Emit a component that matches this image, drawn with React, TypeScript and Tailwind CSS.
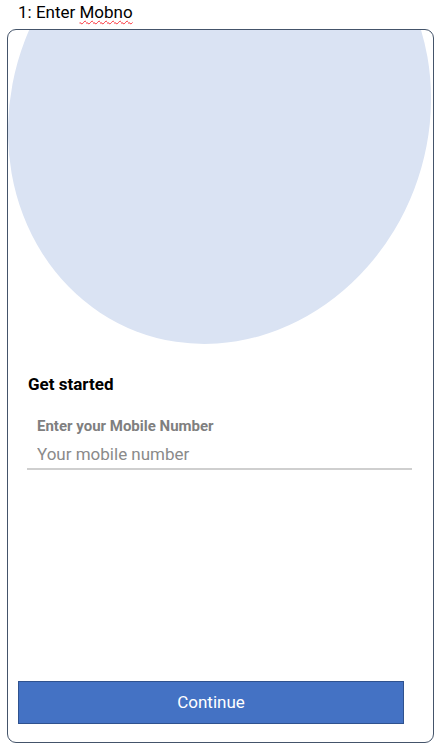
import React from 'react';

const App = () => {
  const [mobile, setMobile] = React.useState('');

  return (
    <div className="w-[440px] h-[748px] bg-white font-['Roboto',sans-serif] text-black overflow-hidden">
      <div className="pl-[18px] h-6 text-[17px] leading-6">
        1: Enter <span className="underline decoration-wavy decoration-red-500 decoration-1 underline-offset-2">Mobno</span>
      </div>

      {/* Card */}
      <div className="mt-[5px] ml-[7px] w-[427px] h-[714px] border border-[#44546a] rounded-[9px] overflow-hidden flex flex-col">
        {/* Decorative blob */}
        <svg className="block shrink-0" width="425" height="315" viewBox="8 30 425 315">
          <ellipse cx="219.5" cy="115" rx="208.4" ry="231.8" transform="rotate(21 219.5 115)" fill="#dae3f3" />
        </svg>

        <div className="pl-5 pr-5 mt-[27px] text-[17px] leading-6 font-bold">Get started</div>

        <div className="pl-[29px] mt-5 text-[15px] leading-5 font-bold text-[#7f7f7f]">Enter your Mobile Number</div>

        <div className="pl-[19px] mt-1.5 w-[404px]">
          <input
            value={mobile}
            onChange={(e) => setMobile(e.target.value)}
            placeholder="Your mobile number"
            className="w-full h-[28px] pl-2.5 pb-0.5 text-[17px] leading-6 text-[#555] placeholder:text-[#8a8a8a] border-b-2 border-[#cfcfcf] outline-none bg-transparent"
          />
        </div>

        <div className="mt-auto mb-[18px] pl-[10px]">
          <button className="w-[386px] h-[43px] bg-[#4472c4] border border-[#2f528f] text-white text-[17px]">
            Continue
          </button>
        </div>
      </div>
    </div>
  );
};

export default App;
